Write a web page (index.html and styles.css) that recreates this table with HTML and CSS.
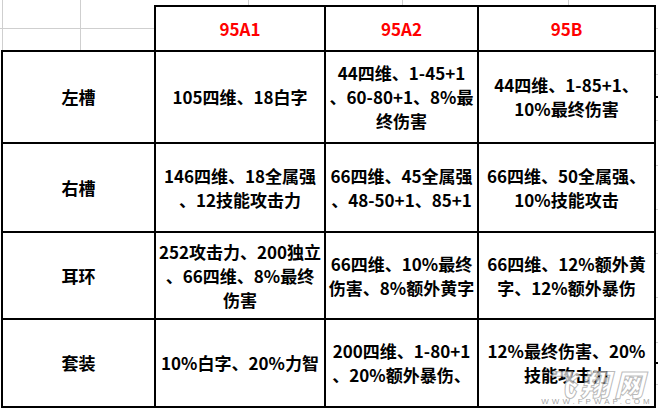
FILE: index.html
```html
<!DOCTYPE html>
<html lang="zh-CN">
<head>
<meta charset="utf-8">
<title>95装备对比</title>
<link rel="stylesheet" href="styles.css">
</head>
<body>
<div class="sheet">
  <div class="grid">
    <div class="cell corner"></div>
    <div class="cell head">95A1</div>
    <div class="cell head">95A2</div>
    <div class="cell head">95B</div>

    <div class="cell label">左槽</div>
    <div class="cell">105四维、18白字</div>
    <div class="cell">44四维、1-45+1<br>、60-80+1、8%最<br>终伤害</div>
    <div class="cell">44四维、1-85+1、<br>10%最终伤害</div>

    <div class="cell label">右槽</div>
    <div class="cell">146四维、18全属强<br>、12技能攻击力</div>
    <div class="cell">66四维、45全属强<br>、48-50+1、85+1</div>
    <div class="cell">66四维、50全属强、<br>10%技能攻击</div>

    <div class="cell label">耳环</div>
    <div class="cell">252攻击力、200独立<br>、66四维、8%最终<br>伤害</div>
    <div class="cell">66四维、10%最终<br>伤害、8%额外黄字</div>
    <div class="cell">66四维、12%额外黄<br>字、12%额外暴伤</div>

    <div class="cell label">套装</div>
    <div class="cell">10%白字、20%力智</div>
    <div class="cell">200四维、1-80+1<br>、20%额外暴伤、</div>
    <div class="cell">12%最终伤害、20%<br>技能攻击力</div>
  </div>
  <div class="watermark">
    <div class="wm-logo">飞翔网</div>
    <div class="wm-url">WWW.FPWAP.COM</div>
  </div>
</div>
</body>
</html>
```
FILE: styles.css
```css
html, body {
  margin: 0;
  padding: 0;
  background: #fff;
}
body {
  font-family: "Noto Sans CJK SC", "Noto Sans", sans-serif;
  font-weight: 700;
  font-size: 17px;
  color: #000;
  overflow: hidden;
}
.sheet {
  position: relative;
  width: 658px;
  height: 410px;
  box-sizing: border-box;
  padding: 5px 0 0 1px;
  background:
    linear-gradient(#cfcfcf, #cfcfcf) 2px 0 / 1px 50px no-repeat,
    linear-gradient(#cfcfcf, #cfcfcf) 80px 0 / 1px 50px no-repeat,
    linear-gradient(#cfcfcf, #cfcfcf) 0 28px / 155px 1px no-repeat,
    linear-gradient(#cfcfcf, #cfcfcf) 248px 0 / 1px 5px no-repeat,
    linear-gradient(#cfcfcf, #cfcfcf) 402px 0 / 1px 5px no-repeat,
    linear-gradient(#cfcfcf, #cfcfcf) 568px 0 / 1px 5px no-repeat,
    linear-gradient(#cfcfcf, #cfcfcf) 656px 28px / 2px 1px no-repeat,
    linear-gradient(#cfcfcf, #cfcfcf) 656px 74px / 2px 1px no-repeat,
    linear-gradient(#000, #000) 656px 96px / 2px 2px no-repeat,
    linear-gradient(#cfcfcf, #cfcfcf) 656px 120px / 2px 1px no-repeat,
    linear-gradient(#cfcfcf, #cfcfcf) 656px 165px / 2px 1px no-repeat,
    linear-gradient(#cfcfcf, #cfcfcf) 656px 209px / 2px 1px no-repeat,
    linear-gradient(#cfcfcf, #cfcfcf) 656px 253px / 2px 1px no-repeat,
    linear-gradient(#cfcfcf, #cfcfcf) 656px 297px / 2px 1px no-repeat,
    linear-gradient(#cfcfcf, #cfcfcf) 656px 342px / 2px 1px no-repeat,
    linear-gradient(#000, #000) 656px 362px / 2px 2px no-repeat,
    linear-gradient(#cfcfcf, #cfcfcf) 656px 384px / 2px 1px no-repeat,
    #fff;
}
.grid {
  display: grid;
  grid-template-columns: 155px 170px 153px 177px;
  grid-template-rows: 47px 92px 89px 87px 88px;
}
.cell {
  box-sizing: border-box;
  border-right: 2px solid #000;
  border-bottom: 2px solid #000;
  display: flex;
  align-items: center;
  justify-content: center;
  text-align: center;
  line-height: 24px;
  white-space: nowrap;
}
.corner {
  background: transparent;
}
.head {
  border-top: 2px solid #000;
  color: #f00;
}
.label {
  border-left: 2px solid #000;
}
.watermark {
  position: absolute;
  left: 540px;
  top: 370px;
  width: 114px;
  display: flex;
  flex-direction: column;
  align-items: center;
  pointer-events: none;
}
.wm-logo {
  font-size: 30px;
  line-height: 27px;
  font-weight: 900;
  font-style: italic;
  letter-spacing: 4px;
  color: rgba(255, 255, 255, 0.7);
  -webkit-text-stroke: 1px rgba(140, 140, 140, 0.6);
}
.wm-url {
  font-family: "Liberation Sans", sans-serif;
  font-size: 8px;
  line-height: 9px;
  font-weight: 400;
  letter-spacing: 3px;
  color: rgba(140, 140, 140, 0.8);
}
```
